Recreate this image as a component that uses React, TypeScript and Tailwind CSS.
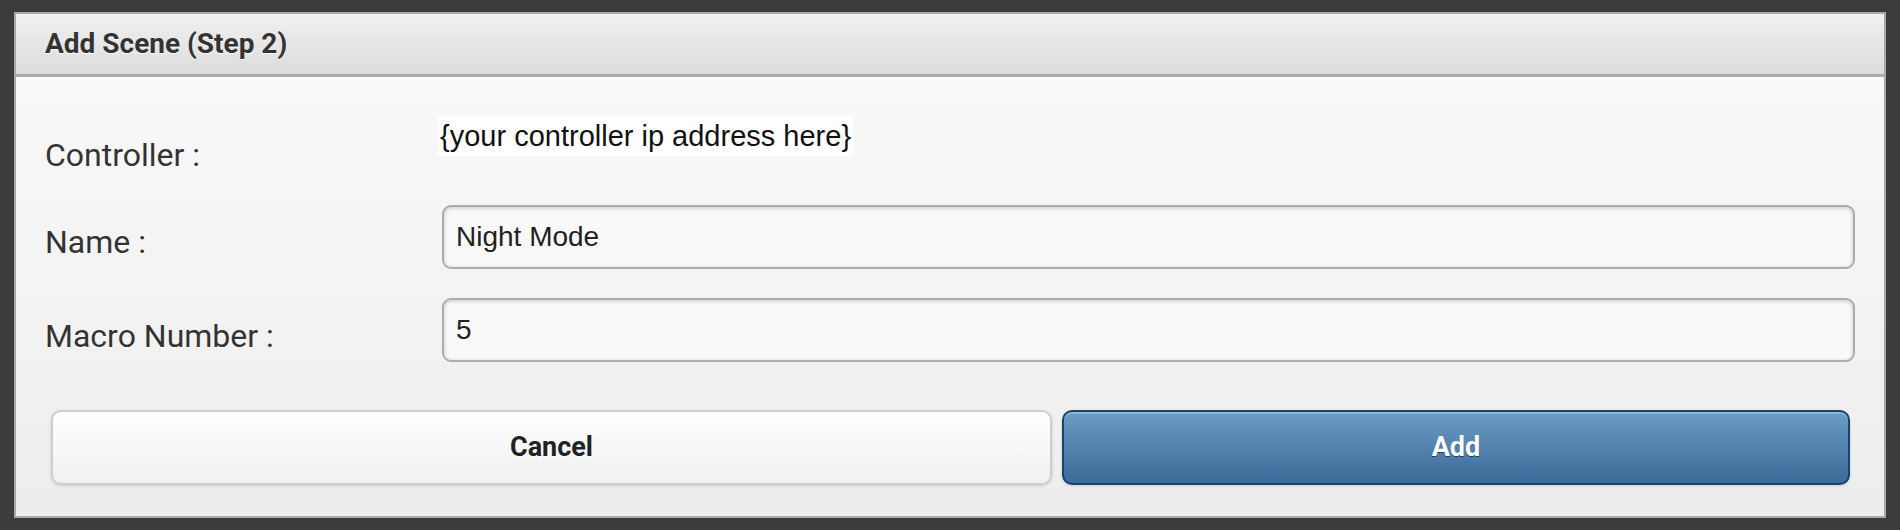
export default function App() {
  return (
    <div className="w-[1900px] h-[530px] bg-[#3c3c3c] pt-[12px] pl-[14px]">
      <div className="w-[1872px] border-2 border-[#a9a9a9] flex flex-col">
        {/* Header */}
        <div className="h-[63px] border-b-[3px] border-b-[#acacac] bg-gradient-to-b from-[#f1f1f1] to-[#dcdcdc] pl-[29px]">
          <h1 className="font-['Roboto',sans-serif] text-[28px] leading-[60px] font-bold text-[#333] [text-shadow:0_1px_0_#fff]">
            Add Scene (Step 2)
          </h1>
        </div>

        {/* Body */}
        <div className="h-[439px] bg-gradient-to-b from-[#f9f9f9] to-[#ededed] px-[29px] pt-[39px] flex flex-col">
          <div className="flex items-start h-[58px]">
            <label className="w-[397px] mt-[20px] font-['Roboto',sans-serif] text-[32px] leading-[38px] text-[#333] [text-shadow:0_1px_0_#fff]">
              Controller :
            </label>
            <span className="-ml-[4px] bg-white px-[2px] h-[40px] leading-[40px] font-['Liberation_Sans',Arial,sans-serif] text-[29px] text-[#111]">
              {"{your controller ip address here}"}
            </span>
          </div>

          <div className="flex items-start mt-[31px]">
            <label className="w-[397px] mt-[18px] font-['Roboto',sans-serif] text-[32px] leading-[38px] text-[#333] [text-shadow:0_1px_0_#fff]">
              Name :
            </label>
            <input
              readOnly
              value="Night Mode"
              className="flex-1 h-[64px] rounded-[9px] border-2 border-[#acacac] bg-[#f9f9f9] pl-[12px] font-['Liberation_Sans',Arial,sans-serif] text-[28px] text-[#222] shadow-[inset_0_1px_4px_rgba(0,0,0,0.2)] outline-none"
            />
          </div>

          <div className="flex items-start mt-[29px]">
            <label className="w-[397px] mt-[19px] font-['Roboto',sans-serif] text-[32px] leading-[38px] text-[#333] [text-shadow:0_1px_0_#fff]">
              Macro Number :
            </label>
            <input
              readOnly
              value="5"
              className="flex-1 h-[64px] rounded-[9px] border-2 border-[#acacac] bg-[#f9f9f9] pl-[12px] font-['Liberation_Sans',Arial,sans-serif] text-[28px] text-[#222] shadow-[inset_0_1px_4px_rgba(0,0,0,0.2)] outline-none"
            />
          </div>

          <div className="flex gap-[10px] mt-[48px] pl-[6px] pr-[5px]">
            <button className="w-[1001px] h-[75px] rounded-[10px] border-2 border-[#cecece] bg-gradient-to-b from-white to-[#f0f0f0] shadow-[0_1px_3px_rgba(0,0,0,0.15)] font-['Roboto',sans-serif] text-[27px] font-bold text-[#222] [text-shadow:0_1px_0_#fff]">
              Cancel
            </button>
            <button className="flex-1 h-[75px] rounded-[10px] border-2 border-[#17446a] bg-gradient-to-b from-[#6a9dc5] to-[#3d6997] shadow-[inset_0_2px_0_rgba(255,255,255,0.25),0_1px_3px_rgba(0,0,0,0.15)] font-['Roboto',sans-serif] text-[27px] font-bold text-white [text-shadow:0_1px_0_#1c3f5f]">
              Add
            </button>
          </div>
        </div>
      </div>
    </div>
  );
}
